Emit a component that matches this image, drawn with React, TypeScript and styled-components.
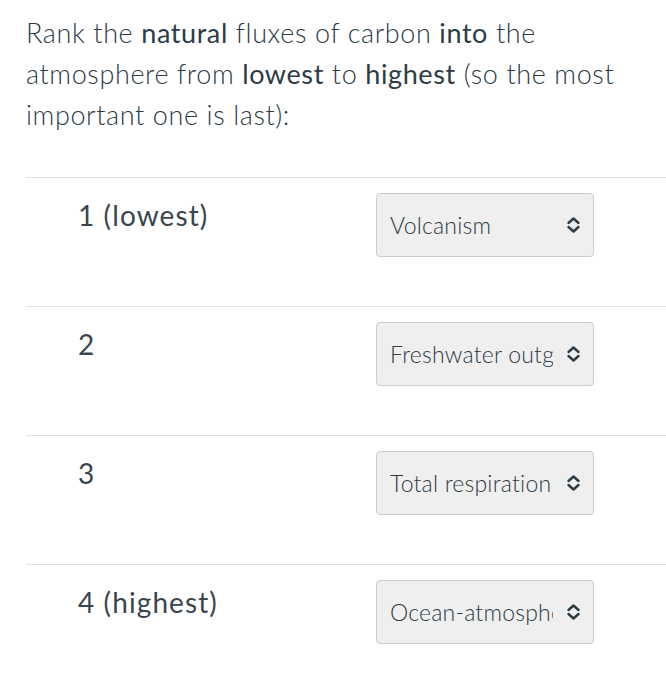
import React from "react";
import styled, { createGlobalStyle } from "styled-components";

const GlobalStyle = createGlobalStyle`
  body {
    margin: 0;
    background: #ffffff;
    font-family: Lato, "Open Sans", sans-serif;
    color: #2d3b45;
  }
`;

const rows = [
  { label: "1 (lowest)", value: "Volcanism" },
  { label: "2", value: "Freshwater outgassing" },
  { label: "3", value: "Total respiration" },
  { label: "4 (highest)", value: "Ocean-atmosphere exchange" },
];

const Chevron: React.FC = () => (
  <svg width="15" height="18" viewBox="0 0 15 18" fill="none">
    <path
      d="M2.5 7 L7.5 2.5 L12.5 7 M2.5 11 L7.5 15.5 L12.5 11"
      stroke="#2d3b45"
      strokeWidth="2.4"
      strokeLinecap="round"
      strokeLinejoin="round"
    />
  </svg>
);

const App: React.FC = () => {
  return (
    <Page>
      <GlobalStyle />
      <Question>
        Rank the <b>natural</b> fluxes of carbon <b>into</b> the atmosphere from{" "}
        <b>lowest</b> to <b>highest</b> (so the most important one is last):
      </Question>
      <Table>
        {rows.map((row) => (
          <Row key={row.label}>
            <Label>{row.label}</Label>
            <SelectWrap>
              <Select defaultValue={row.value}>
                <option>{row.value}</option>
              </Select>
              <IconSlot>
                <Chevron />
              </IconSlot>
            </SelectWrap>
          </Row>
        ))}
      </Table>
    </Page>
  );
};

export default App;

const Page = styled.div`
  padding: 12px 0 0 26px;
`;

const Question = styled.p`
  margin: 0;
  width: 610px;
  font-size: 27px;
  letter-spacing: 0.6px;
  line-height: 41px;
  font-weight: 300;

  b {
    font-weight: 400;
  }
`;

const Table = styled.div`
  margin-top: 42px;
`;

const Row = styled.div`
  display: flex;
  align-items: flex-start;
  height: 128px;
  border-top: 1px solid #dde1e4;
`;

const Label = styled.div`
  width: 298px;
  padding: 21px 0 0 52px;
  font-size: 28px;
  letter-spacing: 1.1px;
  line-height: 32px;
  font-weight: 400;
  color: #3a464f;
`;

const SelectWrap = styled.div`
  position: relative;
  margin-top: 15px;
  width: 218px;
  height: 64px;
`;

const Select = styled.select`
  appearance: none;
  width: 100%;
  height: 100%;
  box-sizing: border-box;
  padding: 0 40px 0 13px;
  background: #efefef;
  border: 1px solid #c7cdd1;
  border-radius: 4px;
  font-family: Lato, "Open Sans", sans-serif;
  font-size: 23px;
  letter-spacing: 0.2px;
  font-weight: 300;
  color: #2d3b45;
  outline: none;
`;

const IconSlot = styled.span`
  position: absolute;
  right: 13px;
  top: 23px;
  display: flex;
  pointer-events: none;
`;
